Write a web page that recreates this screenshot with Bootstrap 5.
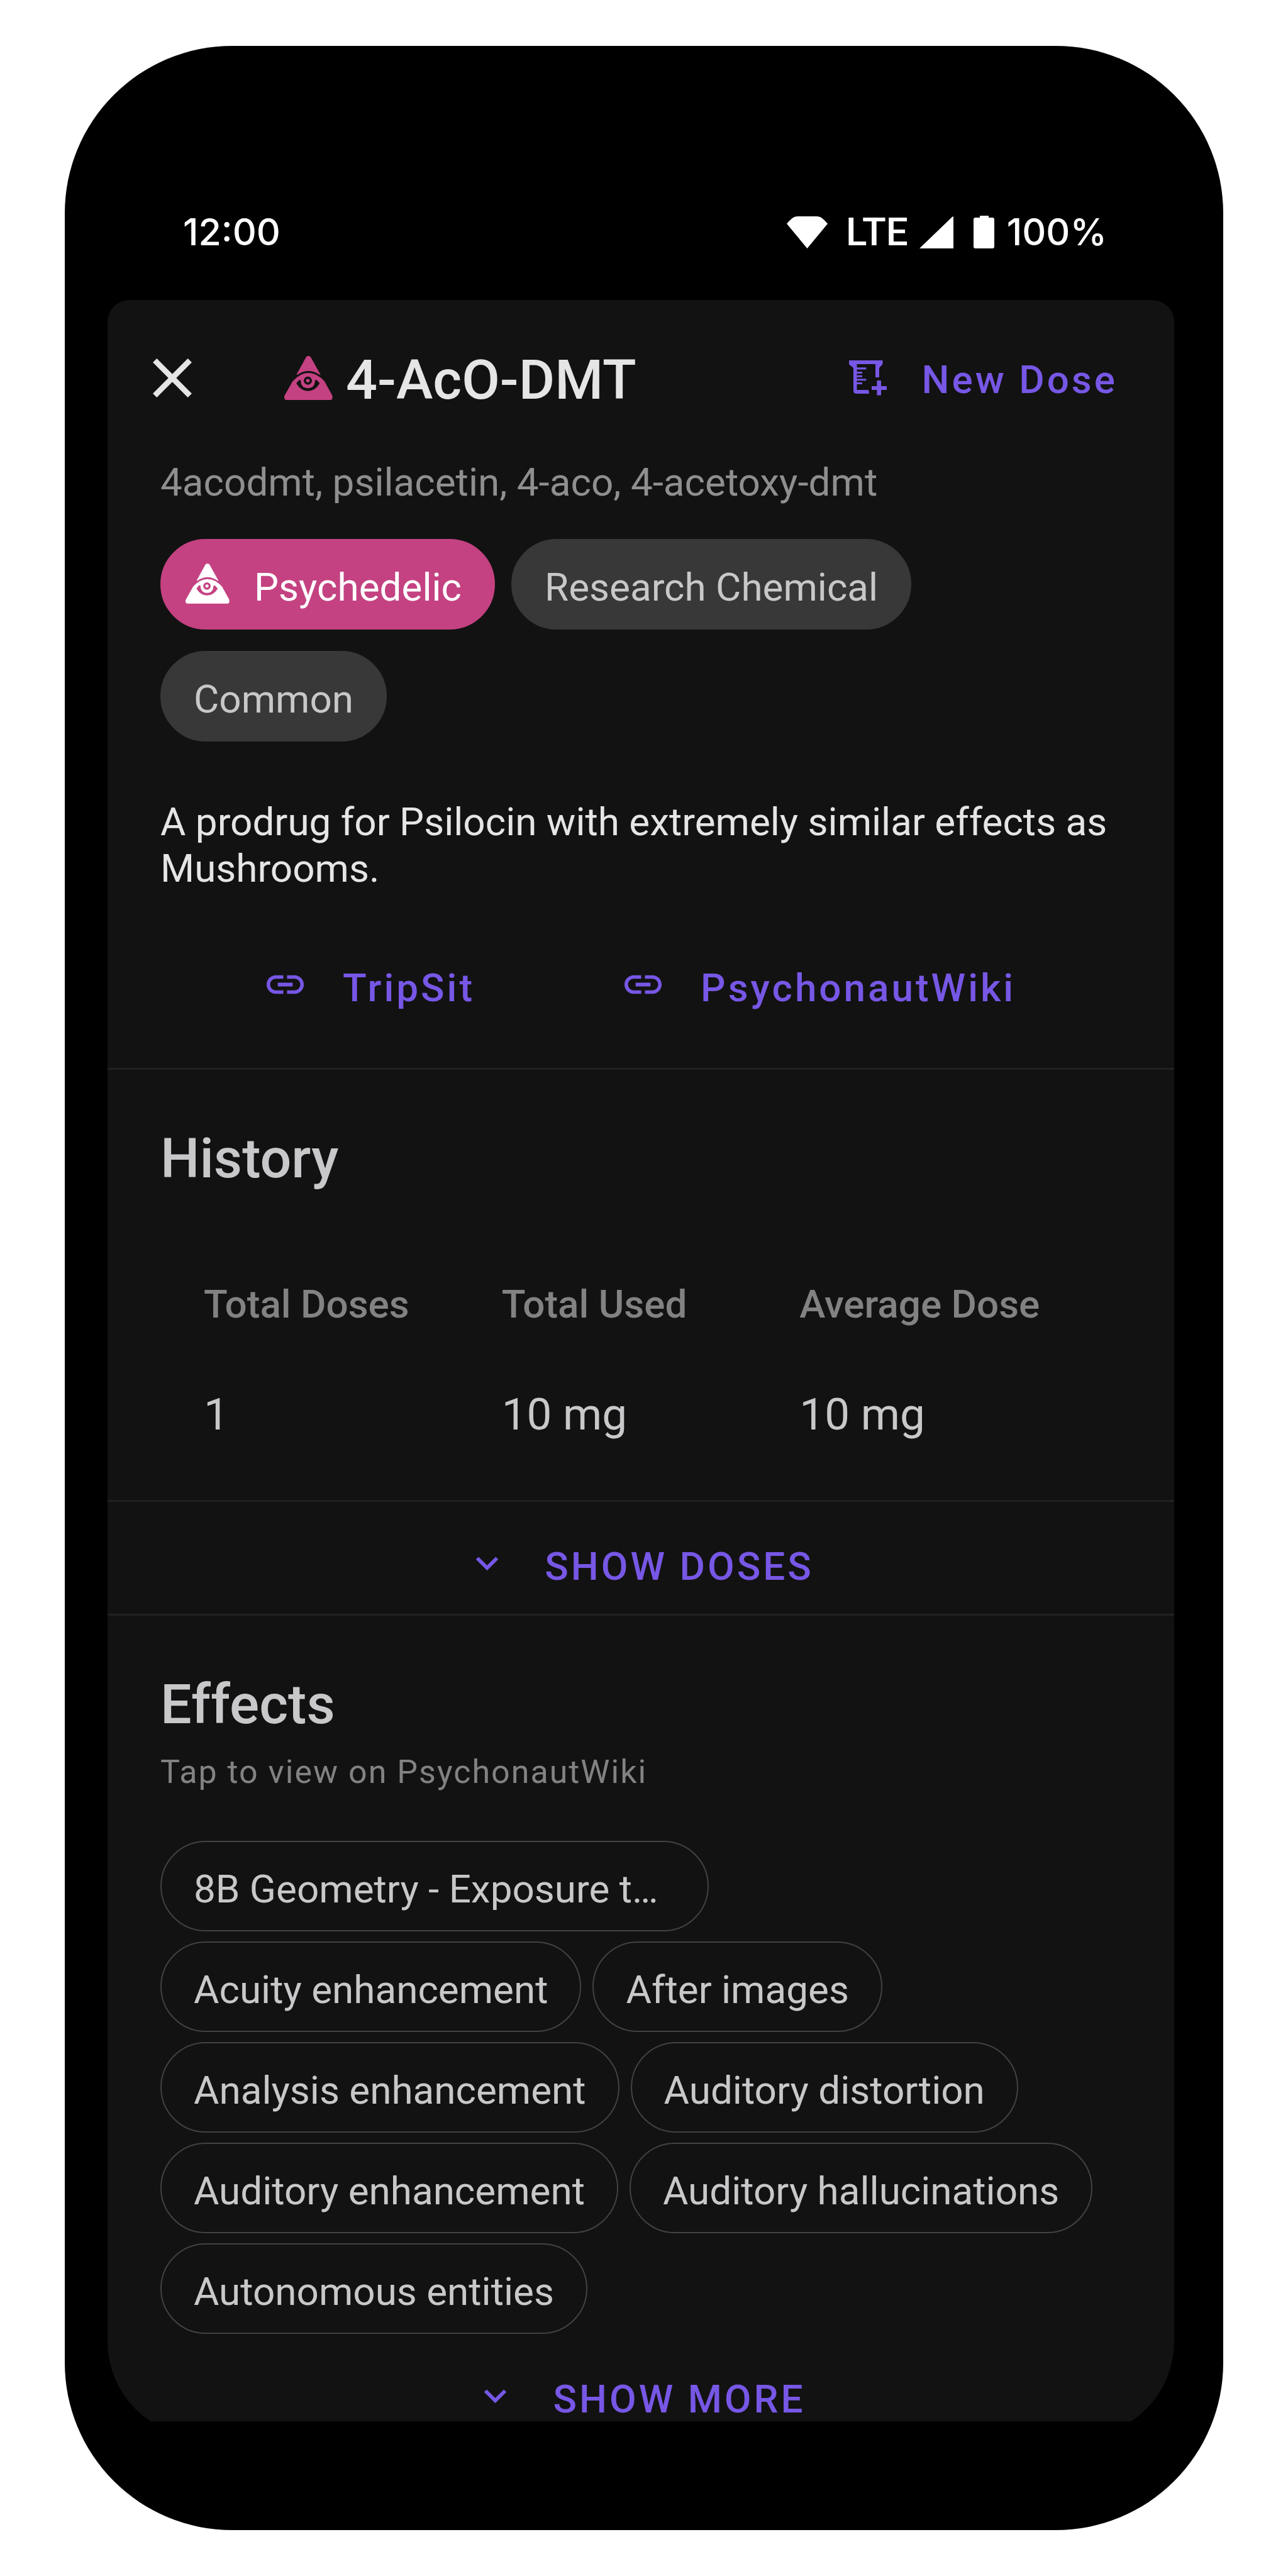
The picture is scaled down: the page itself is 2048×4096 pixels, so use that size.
<!DOCTYPE html>
<html lang="en">
<head>
<meta charset="utf-8">
<meta name="viewport" content="width=device-width, initial-scale=1">
<title>4-AcO-DMT</title>
<link href="https://cdn.jsdelivr.net/npm/bootstrap@5.3.0/dist/css/bootstrap.min.css" rel="stylesheet">
<style>
  :root { --accent: #7757e5; --pink: #c44282; --surface: #121212; --soft: #c8c8ca; --muted: #828282; }
  body { background: #fff; font-family: Roboto, "Liberation Sans", sans-serif; font-size: 62px; line-height: 74px; color: #e5e5e5; padding: 73px 103px; }
  svg { display: block; flex: none; }
  .phone { background: #000; border-radius: 266px; padding: 0 78px 148px 68px; }
  .status { font-family: Inter, Roboto, sans-serif; font-size: 59px; font-weight: 500; color: #fff; padding: 259px 107px 71px 120px; }
  .status .net { font-family: Roboto, sans-serif; font-size: 62px; font-weight: 500; margin: 0 18px 0 29px; }
  .status .power { margin: 0 20px 0 32px; }
  .screen { background: var(--surface); border-radius: 35px 35px 152px 152px; overflow: hidden; }
  .topbar { height: 248px; padding: 0 85px 0 50px; }
  .topbar .close-btn { margin-right: 125px; color: #e5e5e5; }
  .label-text { padding-top: 6px; }
  .page-title { font-size: 88px; line-height: 104px; font-weight: 500; margin: 0 auto 0 21px; }
  .plain { background: none; border: 0; padding: 0; display: flex; align-items: center; text-decoration: none; }
  .action { color: var(--accent); font-weight: 500; letter-spacing: 4px; gap: 56px; padding-right: 5px; }
  .action .lift { margin-bottom: 10px; }
  .block { padding: 0 84px; }
  .rule { border-top: 3px solid #212121; }
  .aliases { color: #8f8f8f; padding-top: 5px; margin-bottom: 53px; }
  .tags { display: flex; flex-wrap: wrap; gap: 34px 26px; }
  .effects { display: flex; flex-wrap: wrap; gap: 16px 18px; }
  .chip { display: flex; align-items: center; border: 2px solid #424242; border-radius: 72px; padding: 38px 51px 29px; line-height: 73px; color: var(--soft); text-decoration: none; white-space: nowrap; }
  .chip-fill { background: #383838; border-color: #383838; }
  .chip-pink { background: var(--pink); border-color: var(--pink); color: #fff; padding-left: 38px; gap: 39px; }
  .chip-pink svg { margin-bottom: 9px; margin-top: -2px; }
  .chip-wide { width: 872px; }
  .summary { margin: 91px 0 112px; }
  .links { gap: 227px; padding-bottom: 87px; }
  .section-title { font-size: 88px; line-height: 104px; font-weight: 500; color: var(--soft); margin: 0; padding-top: 89px; }
  .stats { width: 100%; table-layout: fixed; margin: 143px 0 94px; }
  .stats th { width: 31%; font-weight: 500; color: var(--muted); padding: 0 0 48px 69px; }
  .stats th:last-child { width: 38%; }
  .stats td { font-size: 71px; line-height: 84px; color: var(--soft); padding: 48px 0 0 69px; }
  .expand { padding: 62px 0 35px; }
  .hint { font-size: 52px; line-height: 62px; letter-spacing: 2px; color: var(--muted); margin: 25px 0 78px; }
  .more { padding-top: 63px; }
  .gesture { background: #000; height: 25px; margin-top: -5px; position: relative; }
</style>
</head>
<body>
<svg width="0" height="0" class="position-absolute" aria-hidden="true">
  <symbol id="pyramid" viewBox="98 57 417 378">
    <path fill="currentColor" d="M292 60Q306 53 320 60Q325 63 328 70L409 216Q411 224 402 218Q352 185 306 185Q258 185 212 218Q203 222 207 211L284 70Q287 63 292 60Z"/>
    <path fill="currentColor" fill-rule="evenodd" d="M114 435Q98 434 98 410Q98 402 103 393L170 275Q235 203 306 203Q380 203 444 275L510 393Q515 405 512 422Q510 434 498 435ZM202 293L222 266Q236 260 240 266Q240 308 265 325Q302 344 338 325Q363 308 363 266Q372 260 382 268L403 293Q362 358 302 358Q242 358 202 293ZM266 269a35 35 0 1 0 70 0a35 35 0 1 0-70 0Z"/>
    <circle fill="currentColor" cx="301" cy="269" r="15"/>
  </symbol>
  <symbol id="chain" viewBox="0 0 24 24"><path fill="currentColor" d="M3.900 12c0-1.710 1.390-3.100 3.100-3.100h4V7H7c-2.760 0-5 2.240-5 5s2.240 5 5 5h4v-1.900H7c-1.710 0-3.100-1.390-3.100-3.100zM8 13h8v-2H8v2zm9-6h-4v1.900h4c1.710 0 3.100 1.390 3.100 3.100s-1.390 3.100-3.100 3.100h-4V17h4c2.760 0 5-2.240 5-5s-2.240-5-5-5z"/></symbol>
  <symbol id="chevron" viewBox="0 0 24 24"><path fill="currentColor" d="M7.410 8.580L12 13.170l4.590-4.590L18 10l-6 6-6-6z"/></symbol>
</svg>

<main class="phone">
  <div class="status d-flex align-items-center">
    <span class="me-auto">12:00</span>
    <svg width="65" height="51" viewBox="0 0 65 51" fill="#fff"><path d="M0 11.700C4 7 9 2 13 .800Q15 0 18 0H47Q50 0 52 .800C56 2 61 7 65 11.700L32.500 51Z"/></svg>
    <span class="net">LTE</span>
    <svg width="54" height="51" viewBox="0 0 54 51" fill="#fff"><path d="M54 0V51H0L52 1Z"/></svg>
    <svg class="power" width="33" height="52" viewBox="0 0 33 52" fill="#fff"><path d="M10 0H24V3H30Q33 3 33 6V49Q33 52 30 52H3Q0 52 0 49V6Q0 3 3 3H10Z"/></svg>
    <span>100%</span>
  </div>

  <div class="screen">
    <header class="topbar d-flex align-items-center">
      <button type="button" class="plain close-btn" aria-label="Close">
        <svg width="106" height="106" viewBox="0 0 24 24" fill="currentColor"><path d="M19 6.410L17.590 5 12 10.590 6.410 5 5 6.410 10.590 12 5 17.590 6.410 19 12 13.410 17.590 19 19 17.590 13.410 12z"/></svg>
      </button>
      <svg width="77" height="70" color="#c44282"><use href="#pyramid"/></svg>
      <h1 class="page-title label-text">4-AcO-DMT</h1>
      <button type="button" class="plain action">
        <svg width="60" height="56" viewBox="0 0 60 56" fill="currentColor"><path d="M0 0H53.500V6L48 12V27H42V6H12.500V11.300H27.300V14.500H12.500V17.900H21V20.900H12.500V23.800H21V26.800H12.500V29.300H27.300V32.300H12.500V34.900H21V38H12.500V47H31L32 53H12Q7 53 7 48V12L0 6.500Z"/><path d="M44.400 32H51V41H60V47H51V55.500H44.400V47H36V41H44.400Z"/></svg>
        <span class="label-text">New Dose</span>
      </button>
    </header>

    <section class="block">
      <p class="aliases">4acodmt, psilacetin, 4-aco, 4-acetoxy-dmt</p>
      <div class="tags">
        <span class="chip chip-pink"><svg width="70" height="64"><use href="#pyramid"/></svg>Psychedelic</span>
        <span class="chip chip-fill">Research Chemical</span>
        <span class="chip chip-fill">Common</span>
      </div>
      <p class="summary">A prodrug for Psilocin with extremely similar effects as Mushrooms.</p>
      <div class="links d-flex justify-content-center">
        <a href="#" class="plain action"><svg class="lift" width="71" height="71"><use href="#chain"/></svg>TripSit</a>
        <a href="#" class="plain action"><svg class="lift" width="71" height="71"><use href="#chain"/></svg>PsychonautWiki</a>
      </div>
    </section>

    <section class="block rule">
      <h2 class="section-title">History</h2>
      <table class="stats">
        <thead><tr><th scope="col">Total Doses</th><th scope="col">Total Used</th><th scope="col">Average Dose</th></tr></thead>
        <tbody><tr><td>1</td><td>10 mg</td><td>10 mg</td></tr></tbody>
      </table>
    </section>

    <div class="rule expand d-flex justify-content-center">
      <button type="button" class="plain action"><svg class="lift" width="71" height="71"><use href="#chevron"/></svg>SHOW DOSES</button>
    </div>

    <section class="block rule">
      <h2 class="section-title">Effects</h2>
      <p class="hint">Tap to view on PsychonautWiki</p>
      <div class="effects">
        <a href="#" class="chip chip-wide">8B Geometry - Exposure t…</a>
        <a href="#" class="chip">Acuity enhancement</a>
        <a href="#" class="chip">After images</a>
        <a href="#" class="chip">Analysis enhancement</a>
        <a href="#" class="chip">Auditory distortion</a>
        <a href="#" class="chip">Auditory enhancement</a>
        <a href="#" class="chip">Auditory hallucinations</a>
        <a href="#" class="chip">Autonomous entities</a>
      </div>
      <div class="more d-flex justify-content-center">
        <button type="button" class="plain action"><svg class="lift" width="71" height="71"><use href="#chevron"/></svg>SHOW MORE</button>
      </div>
    </section>
    <div class="gesture"></div>
  </div>
</main>
<script src="https://cdn.jsdelivr.net/npm/bootstrap@5.3.0/dist/js/bootstrap.bundle.min.js"></script>
</body>
</html>
